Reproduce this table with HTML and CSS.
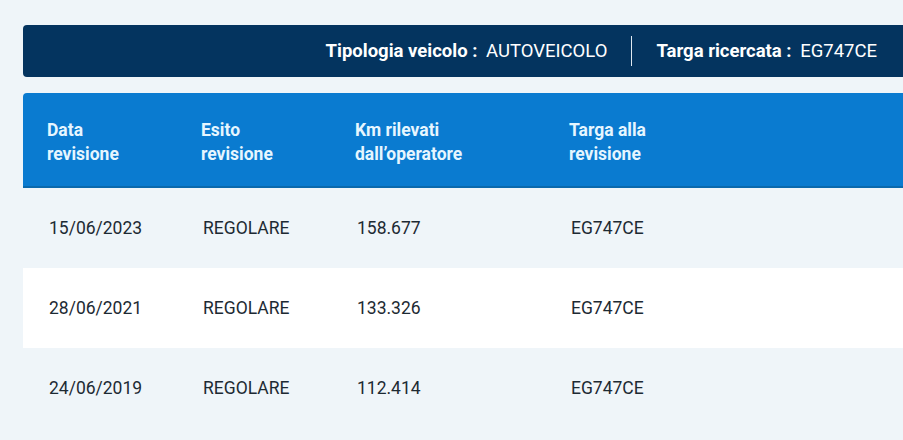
FILE: index.html
```html
<!DOCTYPE html>
<html lang="it">
<head>
    <meta charset="UTF-8">
    <meta name="viewport" content="width=device-width, initial-scale=1.0">
    <title>Verifica revisione</title>
    <link rel="stylesheet" href="styles.css">
</head>
<body>
    <div class="page">
        <div class="banner">
            <div class="info"><b>Tipologia veicolo :</b> AUTOVEICOLO</div>
            <div class="divider"></div>
            <div class="info"><b>Targa ricercata :</b> EG747CE</div>
        </div>

        <div class="table">
            <div class="row head">
                <div>Data<br>revisione</div>
                <div>Esito<br>revisione</div>
                <div>Km rilevati<br>dall’operatore</div>
                <div>Targa alla<br>revisione</div>
            </div>
            <div class="row">
                <div>15/06/2023</div>
                <div>REGOLARE</div>
                <div>158.677</div>
                <div>EG747CE</div>
            </div>
            <div class="row odd">
                <div>28/06/2021</div>
                <div>REGOLARE</div>
                <div>133.326</div>
                <div>EG747CE</div>
            </div>
            <div class="row">
                <div>24/06/2019</div>
                <div>REGOLARE</div>
                <div>112.414</div>
                <div>EG747CE</div>
            </div>
        </div>
    </div>
</body>
</html>
```

FILE: styles.css
```css
body {
    margin: 0;
    font-family: Roboto, "Liberation Sans", sans-serif;
    background-color: #eff5f9;
    overflow: hidden;
}
.page {
    padding: 25px 0 0 23px;
    width: 920px;
}
.banner {
    display: flex;
    align-items: center;
    justify-content: flex-end;
    height: 52px;
    padding-right: 66px;
    background: #04345f;
    color: #ffffff;
    border-radius: 4px 0 0 4px;
    font-size: 18.5px;
}
.info b {
    font-weight: 700;
    margin-right: 4px;
}
.divider {
    width: 1px;
    height: 30px;
    margin: 0 24px;
    background: #dfe8f0;
}
.table {
    margin-top: 16px;
}
.row {
    display: grid;
    grid-template-columns: 154px 154px 214px 1fr;
    align-items: center;
    height: 80px;
    padding-left: 26px;
    font-size: 17.5px;
    color: #1d2a33;
}
.row.odd {
    background: #ffffff;
}
.row.head {
    box-sizing: border-box;
    height: 95px;
    padding-top: 4px;
    padding-left: 24px;
    background: #0a7bd0;
    border-bottom: 2px solid #0a69ad;
    border-radius: 4px 0 0 0;
    color: #e6f6ff;
    font-weight: 700;
    line-height: 24px;
}
```
